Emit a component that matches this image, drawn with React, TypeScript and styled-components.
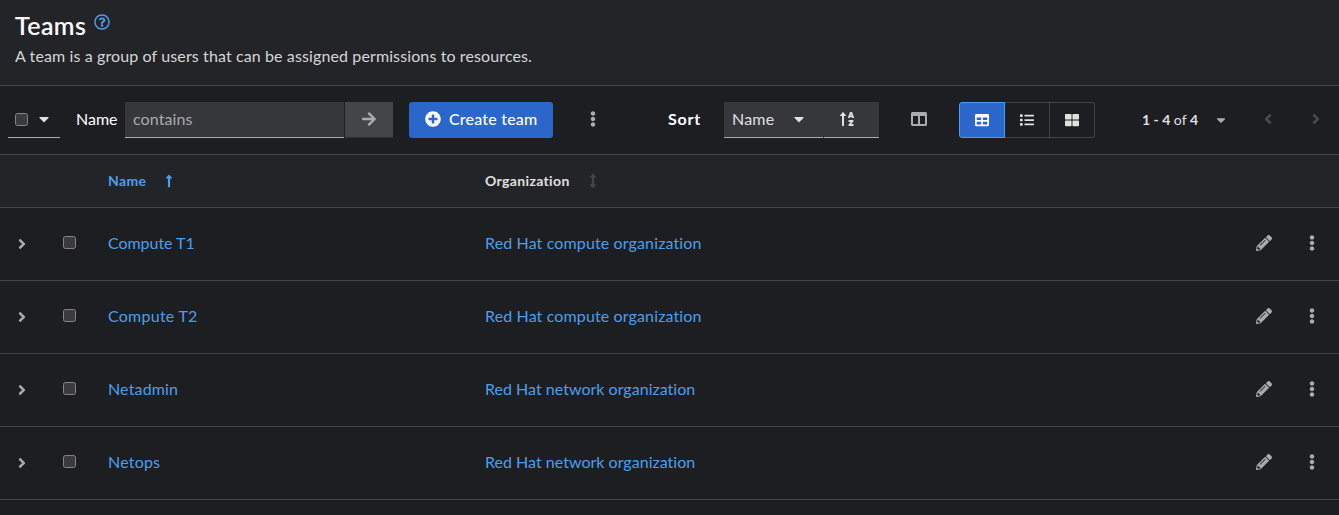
import React from 'react';
import styled, { createGlobalStyle } from 'styled-components';
import {
  FaAngleLeft, FaAngleRight, FaArrowRight, FaArrowsAltV, FaCaretDown, FaColumns, FaEllipsisV, FaList,
  FaLongArrowAltUp, FaPlusCircle, FaRegQuestionCircle, FaSortAlphaUp, FaTable, FaThLarge,
} from 'react-icons/fa';

const color = {
  page: '#1c1e21', raised: '#232427', line: '#444548', field: '#36373a', control: '#444548',
  underline: '#aaabac', text: '#e0e0e0', muted: '#aaabac', disabled: '#4b4c4f', link: '#4b9eee',
  primary: '#2b66ca', white: '#ffffff',
};

const GlobalStyle = createGlobalStyle`
  *, *::before, *::after { box-sizing: border-box; }
  body {
    margin: 0;
    background: ${color.page};
    color: ${color.text};
    font-family: Lato, "Liberation Sans", sans-serif;
    font-size: 16px;
    line-height: 24px;
    overflow: hidden;
  }
  svg { display: block; flex: none; }
  button { font: inherit; color: inherit; background: none; border: 0; padding: 0; }
`;

const Page = styled.main`
  min-height: 515px;
  background: ${color.page};
`;

const Header = styled.header`
  height: 86px;
  padding: 10px 15px 0;
  background: ${color.raised};
  border-bottom: 1px solid ${color.line};
`;

const TitleRow = styled.div`
  display: flex;
  gap: 8px;
  color: ${color.link};
`;

const Title = styled.h1`
  margin: 0;
  color: ${color.white};
  font-size: 25px;
  font-weight: 500;
  line-height: 30px;
  letter-spacing: 0.45px;
  -webkit-text-stroke: 0.2px currentColor;
`;

const HelpButton = styled.button`
  height: 16px;
  margin-top: 4px;
`;

const Description = styled.p`
  margin: 4px 0 0;
  color: #d6d6d7;
  letter-spacing: 0.115px;
`;

const Toolbar = styled.div`
  display: flex;
  align-items: center;
  height: 69px;
  padding: 0 0 1px 8px;
  border-bottom: 1px solid ${color.line};
`;

const BulkSelect = styled.div`
  display: flex;
  align-items: center;
  gap: 8px;
  width: 52px;
  height: 36px;
  padding-left: 7px;
  border-bottom: 1px solid ${color.underline};
`;

const Checkbox = styled.input.attrs({ type: 'checkbox' })`
  appearance: none;
  flex: none;
  width: 13px;
  height: 13px;
  margin: 0;
  border: 1px solid #858585;
  border-radius: 2.5px;
  background: #3b3b3b;
`;

const FilterLabel = styled.span`
  width: 49px;
  margin-left: 16px;
  padding-bottom: 2px;
  color: ${color.white};
`;

const FilterInput = styled.input`
  width: 219px;
  height: 36px;
  padding: 0 8px 1px;
  border: 0;
  border-bottom: 1px solid ${color.underline};
  border-radius: 0;
  background: ${color.field};
  color: ${color.text};
  font: inherit;
  letter-spacing: 0.1px;
  &::placeholder { color: ${color.muted}; opacity: 1; }
`;

const ApplyButton = styled.button`
  display: grid;
  place-items: center;
  width: 48px;
  height: 36px;
  margin-left: 1px;
  background: ${color.control};
  border-bottom: 1px solid #313235;
  color: ${color.muted};
`;

const CreateButton = styled.button`
  display: flex;
  align-items: center;
  gap: 8px;
  width: 144px;
  height: 36px;
  margin-left: 16px;
  padding: 0 0 2px 16px;
  border-radius: 3px;
  background: ${color.primary};
  color: ${color.white};
  font-weight: 500;
  letter-spacing: 0.2px;
`;

const IconButton = styled.button<{ $width?: number; $tone?: string }>`
  display: grid;
  place-items: center;
  width: ${(p) => p.$width ?? 48}px;
  height: 36px;
  padding-bottom: 2px;
  color: ${(p) => p.$tone ?? color.muted};
`;

const SortGroup = styled.div`
  display: flex;
  align-items: center;
  margin-left: 35px;
`;

const SortLabel = styled.span`
  width: 56px;
  padding-bottom: 1px;
  color: ${color.white};
  font-weight: 700;
  letter-spacing: 0.8px;
`;

const SortSelect = styled.button`
  display: flex;
  align-items: center;
  justify-content: space-between;
  width: 99px;
  height: 36px;
  padding: 0 16px 0 8px;
  border-bottom: 1px solid ${color.underline};
  background: ${color.field};
  letter-spacing: 0.2px;
`;

const SortDirection = styled.button`
  display: flex;
  align-items: center;
  width: 55px;
  height: 36px;
  margin-left: 1px;
  padding-left: 15px;
  background: ${color.field};
  border-bottom: 1px solid ${color.underline};
  box-shadow: -1px 0 ${color.field};
`;

const ViewToggle = styled.div`
  display: flex;
`;

const ViewButton = styled.button<{ $active?: boolean }>`
  display: grid;
  place-items: center;
  width: 46px;
  height: 36px;
  border: 1px solid ${(p) => (p.$active ? color.link : color.line)};
  background: ${(p) => (p.$active ? color.primary : 'transparent')};
  color: ${(p) => (p.$active ? color.white : color.text)};
  & + & { width: 45px; border-left: 0; }
  &:first-child { border-radius: 3px 0 0 3px; }
  &:last-child { border-radius: 0 3px 3px 0; }
`;

const Pagination = styled.nav`
  display: flex;
  align-items: center;
  margin-left: auto;
`;

const Range = styled.button`
  display: flex;
  align-items: center;
  justify-content: space-between;
  width: 86px;
  margin-right: 16px;
  font-size: 14px;
`;

const Table = styled.table`
  width: 100%;
  table-layout: fixed;
  border-collapse: separate;
  border-spacing: 0;
`;

const HeaderCell = styled.th<{ $width?: number; $sorted?: boolean }>`
  width: ${(p) => (p.$width ? `${p.$width}px` : 'auto')};
  height: 53px;
  padding: 0;
  background: ${color.raised};
  border-bottom: 1px solid ${color.line};
  color: ${(p) => (p.$sorted ? color.link : color.text)};
  font-size: 14px;
  text-align: left;
`;

const SortHeading = styled.span`
  display: flex;
  align-items: center;
  gap: 16px;
  letter-spacing: 0.35px;
`;

const Unsorted = styled.span`
  color: ${color.line};
`;

const Cell = styled.td<{ $inset?: number }>`
  height: 73px;
  padding: 0 0 0 ${(p) => p.$inset ?? 0}px;
  border-bottom: 1px solid ${color.line};
`;

const CheckCell = styled(Cell)`
  padding-left: 19px;
  padding-bottom: 3px;
  ${Checkbox} { display: block; }
`;

const TextCell = styled(Cell)`
  padding-bottom: 2px;
`;

const Link = styled.a<{ $spacing: number }>`
  color: ${color.link};
  letter-spacing: ${(p) => p.$spacing}px;
`;

const Actions = styled.div`
  display: flex;
  justify-content: flex-end;
  padding: 0 3px 1px 0;
`;

const PencilIcon = () => (
  <svg width="16" height="16" viewBox="0 0 512 512" fill="currentColor">
    <path d="M497.9 142.1l-46.1 46.1c-4.7 4.7-12.3 4.7-17 0l-111-111c-4.7-4.7-4.7-12.3 0-17l46.1-46.1c18.7-18.7 49.1-18.7 67.9 0l60.1 60.1c18.8 18.7 18.8 49.1 0 67.9zM284.2 99.8L21.6 362.4.4 483.9c-2.9 16.4 11.4 30.6 27.8 27.8l121.5-21.3 262.6-262.6c4.7-4.7 4.7-12.3 0-17l-111-111c-4.8-4.7-12.4-4.7-17.1 0zM124.1 339.9c-5.5-5.5-5.5-14.3 0-19.8l154-154c5.5-5.5 14.3-5.5 19.8 0s5.5 14.3 0 19.8l-154 154c-5.5 5.5-14.3 5.5-19.8 0zM88 424h48v36.3l-64.5 11.3-31.1-31.1L51.7 376H88v48z" />
  </svg>
);

const compute = { organization: 'Red Hat compute organization', orgSpacing: 0.13 };
const network = { organization: 'Red Hat network organization', orgSpacing: 0.02 };

const teams = [
  { name: 'Compute T1', spacing: -0.05, ...compute },
  { name: 'Compute T2', spacing: 0.25, ...compute },
  { name: 'Netadmin', spacing: 0.15, ...network },
  { name: 'Netops', spacing: 0.2, ...network },
];

export default function App() {
  return (
    <Page>
      <GlobalStyle />
      <Header>
        <TitleRow>
          <Title>Teams</Title>
          <HelpButton aria-label="Help"><FaRegQuestionCircle size={16} /></HelpButton>
        </TitleRow>
        <Description>A team is a group of users that can be assigned permissions to resources.</Description>
      </Header>

      <Toolbar>
        <BulkSelect>
          <Checkbox aria-label="Select all" />
          <FaCaretDown size={16} />
        </BulkSelect>
        <FilterLabel>Name</FilterLabel>
        <FilterInput placeholder="contains" />
        <ApplyButton aria-label="Apply filter"><FaArrowRight size={16} /></ApplyButton>
        <CreateButton><FaPlusCircle size={16} />Create team</CreateButton>
        <IconButton $width={80} aria-label="More actions"><FaEllipsisV size={16} /></IconButton>
        <SortGroup>
          <SortLabel>Sort</SortLabel>
          <SortSelect>Name<FaCaretDown size={16} /></SortSelect>
          <SortDirection aria-label="Sort direction"><FaSortAlphaUp size={16} /></SortDirection>
        </SortGroup>
        <IconButton $width={80} aria-label="Manage columns"><FaColumns size={16} /></IconButton>
        <ViewToggle>
          <ViewButton $active aria-label="Table view"><FaTable size={14} /></ViewButton>
          <ViewButton aria-label="List view"><FaList size={14} /></ViewButton>
          <ViewButton aria-label="Card view"><FaThLarge size={14} /></ViewButton>
        </ViewToggle>
        <Pagination>
          <Range>
            <span><b>1 - 4</b> of <b>4</b></span>
            <FaCaretDown size={14} color={color.muted} />
          </Range>
          <IconButton $tone={color.disabled} aria-label="Previous page"><FaAngleLeft size={16} /></IconButton>
          <IconButton $width={47} $tone={color.disabled} aria-label="Next page"><FaAngleRight size={16} /></IconButton>
        </Pagination>
      </Toolbar>

      <Table>
        <thead>
          <tr>
            <HeaderCell $width={44} />
            <HeaderCell $width={64} />
            <HeaderCell $width={377} $sorted>
              <SortHeading>Name<FaLongArrowAltUp size={14} /></SortHeading>
            </HeaderCell>
            <HeaderCell>
              <SortHeading>Organization<Unsorted><FaArrowsAltV size={14} /></Unsorted></SortHeading>
            </HeaderCell>
            <HeaderCell $width={120} />
          </tr>
        </thead>
        <tbody>
          {teams.map((team) => (
            <tr key={team.name}>
              <Cell $inset={14}><FaAngleRight size={16} color={color.muted} /></Cell>
              <CheckCell><Checkbox aria-label={`Select ${team.name}`} /></CheckCell>
              <TextCell><Link $spacing={team.spacing}>{team.name}</Link></TextCell>
              <TextCell><Link $spacing={team.orgSpacing}>{team.organization}</Link></TextCell>
              <Cell>
                <Actions>
                  <IconButton aria-label="Edit team"><PencilIcon /></IconButton>
                  <IconButton aria-label="Team actions"><FaEllipsisV size={16} /></IconButton>
                </Actions>
              </Cell>
            </tr>
          ))}
        </tbody>
      </Table>
    </Page>
  );
}
